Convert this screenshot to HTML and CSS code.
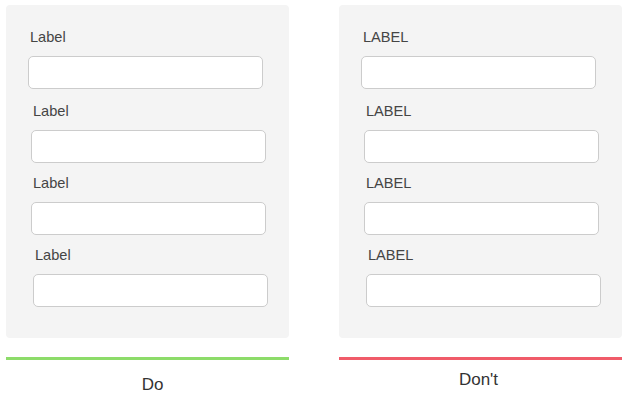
FILE: index.html
```html
<!DOCTYPE html>
<html lang="en">
<head>
<meta charset="utf-8">
<title>Do / Don't — labels</title>
<link rel="stylesheet" href="styles.css">
</head>
<body>
<main class="compare">
  <section class="example">
    <div class="panel">
      <div class="field field--first"><label class="label">Label</label><div class="input"></div></div>
      <div class="field field--s1"><label class="label">Label</label><div class="input"></div></div>
      <div class="field field--s1"><label class="label">Label</label><div class="input"></div></div>
      <div class="field field--s2"><label class="label">Label</label><div class="input"></div></div>
    </div>
    <div class="rule rule--do"></div>
    <p class="caption caption--do">Do</p>
  </section>
  <section class="example">
    <div class="panel">
      <div class="field field--first"><label class="label">LABEL</label><div class="input"></div></div>
      <div class="field field--s1"><label class="label">LABEL</label><div class="input"></div></div>
      <div class="field field--s1"><label class="label">LABEL</label><div class="input"></div></div>
      <div class="field field--s2"><label class="label">LABEL</label><div class="input"></div></div>
    </div>
    <div class="rule rule--dont"></div>
    <p class="caption caption--dont">Don't</p>
  </section>
</main>
</body>
</html>
```

FILE: styles.css
```css
html, body {
  margin: 0;
  padding: 0;
  background: #ffffff;
}

body {
  font-family: "Liberation Sans", Arial, Helvetica, sans-serif;
  color: #444444;
}

.compare {
  display: flex;
  gap: 50px;
  padding: 5px 0 0 6px;
}

.example {
  width: 283px;
  display: flex;
  flex-direction: column;
}

.panel {
  box-sizing: border-box;
  height: 333px;
  background: #f4f4f4;
  border-radius: 4px;
  padding: 23px 0 0 22px;
  display: flex;
  flex-direction: column;
  gap: 11px;
}

.field {
  display: flex;
  flex-direction: column;
  width: 235px;
}

.field--first {
  margin-bottom: 2px;
}

.field--s1 {
  margin-left: 3px;
}

.field--s2 {
  margin-left: 5px;
}

.label {
  font-size: 14.6px;
  line-height: 18px;
  padding-left: 2px;
  margin-bottom: 10px;
  color: #454545;
}

.input {
  box-sizing: border-box;
  height: 33px;
  background: #ffffff;
  border: 1px solid #cccccc;
  border-radius: 5px;
}

.rule {
  height: 3px;
  margin-top: 19px;
}

.rule--do {
  background: #8ddc6a;
}

.rule--dont {
  background: #f05b69;
}

.caption {
  margin: 0;
  font-size: 17px;
  line-height: 20px;
  text-align: center;
  color: #333333;
}

.caption--do {
  margin-top: 15px;
  padding-left: 10px;
}

.caption--dont {
  margin-top: 10px;
  padding-right: 4px;
}
```
